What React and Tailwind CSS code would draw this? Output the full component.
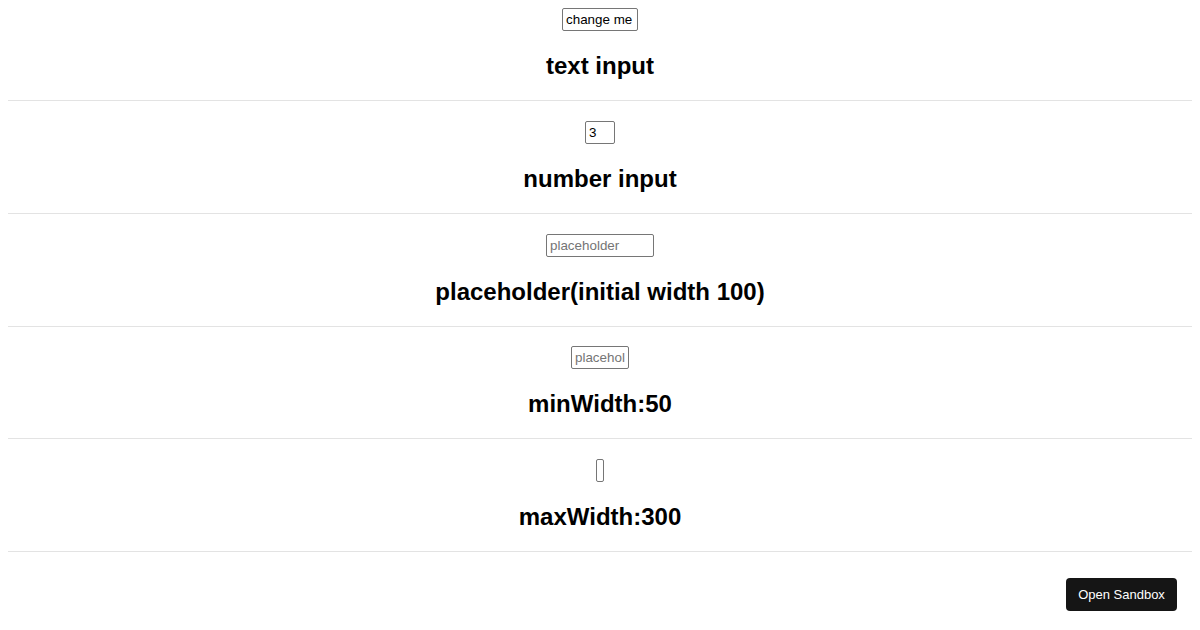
import React from 'react';

const sections = [
  { title: 'text input', value: 'change me', width: 'w-[76px]' },
  { title: 'number input', value: '3', width: 'w-[30px]' },
  { title: 'placeholder(initial width 100)', placeholder: 'placeholder', width: 'w-[108px]' },
  { title: 'minWidth:50', placeholder: 'placeholder', width: 'w-[58px]' },
  { title: 'maxWidth:300', value: '', width: 'w-[8px]' },
];

const Section = ({ item, first }) => (
  <div className={first ? 'pt-2' : 'pt-[19.75px]'}>
    <div className="flex justify-center">
      <input
        type="text"
        defaultValue={item.value}
        placeholder={item.placeholder}
        className={`${item.width} h-[23px] border border-[#767676] rounded-[2px] px-[3px] text-[13.4px] text-black placeholder-[#757575] bg-white outline-none`}
      />
    </div>
    <h2 className="mt-[21px] text-center text-2xl leading-[28px] font-bold text-black">{item.title}</h2>
    <hr className="mt-5 border-t border-[#e3e3e3]" />
  </div>
);

export default function App() {
  return (
    <div className="min-h-[630px] bg-white px-2 font-['Liberation_Sans',Arial,sans-serif]">
      {sections.map((item, i) => (
        <Section key={item.title} item={item} first={i === 0} />
      ))}
      <button className="fixed right-[23px] bottom-[19px] w-[111px] h-[33px] rounded-[4px] bg-[#151515] text-[13px] text-white">
        Open Sandbox
      </button>
    </div>
  );
}
